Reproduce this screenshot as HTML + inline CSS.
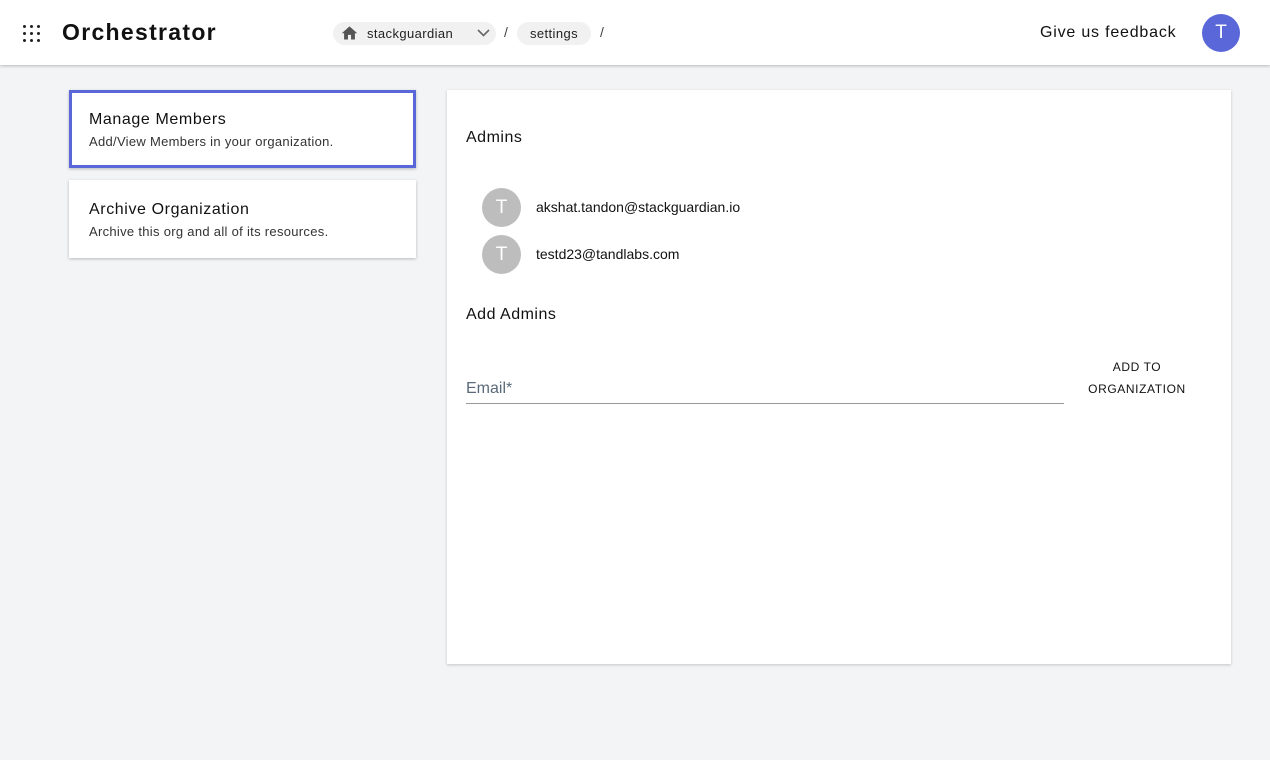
<!DOCTYPE html>
<html><head><style>
*{box-sizing:border-box;margin:0;padding:0}
body{width:1270px;height:760px;background:#f3f4f6;font-family:"Liberation Sans",sans-serif;position:relative;overflow:hidden;color:#111}
.hdr{position:absolute;left:0;top:0;width:1270px;height:65px;background:#fff;box-shadow:0 1px 3px rgba(0,0,0,.25)}
.grid{position:absolute;left:23px;top:25px;width:18px;height:18px}
.grid i{position:absolute;width:3px;height:3px;background:#222;border-radius:50%}
.title{position:absolute;left:62px;top:19px;font-size:23px;font-weight:bold;letter-spacing:1.3px}
.chip{position:absolute;top:22px;height:23px;background:#f1f1f1;border-radius:12px;font-size:13px;line-height:23px;color:#222;letter-spacing:.4px}
.sl{position:absolute;top:24px;font-size:14px;color:#444}
.fb{position:absolute;left:1040px;top:24px;font-size:16px;color:#111;letter-spacing:.8px}
.av{position:absolute;left:1202px;top:14px;width:38px;height:38px;border-radius:50%;background:#5a67d8;color:#fff;font-size:19px;text-align:center;line-height:38px}
.card{position:absolute;left:69px;width:347px;height:78px;background:#fff;box-shadow:0 1px 3px rgba(0,0,0,.25)}
.card h3{position:absolute;left:20px;top:21px;font-size:16px;font-weight:normal;color:#111;letter-spacing:.6px}
.card p{position:absolute;left:20px;top:44px;font-size:13px;color:#333;letter-spacing:.3px}
.main{position:absolute;left:447px;top:90px;width:784px;height:574px;background:#fff;box-shadow:0 1px 3px rgba(0,0,0,.2)}
.lbl{position:absolute;left:19px;font-size:16px;color:#111;letter-spacing:.5px}
.ua{position:absolute;left:35px;width:39px;height:39px;border-radius:50%;background:#bdbdbd;color:#fff;font-size:19px;text-align:center;line-height:39px}
.em{position:absolute;left:89px;font-size:14px;color:#111}
</style></head><body>
<div class="hdr">
<div class="grid"><i style="left:0;top:0"></i><i style="left:7px;top:0"></i><i style="left:14px;top:0"></i><i style="left:0;top:7px"></i><i style="left:7px;top:7px"></i><i style="left:14px;top:7px"></i><i style="left:0;top:14px"></i><i style="left:7px;top:14px"></i><i style="left:14px;top:14px"></i></div>
<div class="title">Orchestrator</div>
<div class="chip" style="left:333px;width:163px"><svg style="position:absolute;left:7px;top:2px" width="19" height="17" viewBox="0 0 24 22"><path d="M10 20v-6h4v6h5v-8h3L12 3 2 12h3v8z" fill="#555"/></svg><span style="position:absolute;left:34px">stackguardian</span><svg style="position:absolute;left:144px;top:7px" width="13" height="9" viewBox="0 0 13 9"><path d="M1 1l5.5 5.5L12 1" stroke="#666" stroke-width="1.6" fill="none"/></svg></div>
<div class="sl" style="left:504px">/</div>
<div class="chip" style="left:517px;width:74px;text-align:center">settings</div>
<div class="sl" style="left:600px">/</div>
<div class="fb">Give us feedback</div>
<div class="av">T</div>
</div>
<div class="card" style="top:90px;border:3px solid #5a67d8"><h3 style="left:17px;top:18px">Manage Members</h3><p style="left:17px;top:41px">Add/View Members in your organization.</p></div>
<div class="card" style="top:180px"><h3>Archive Organization</h3><p>Archive this org and all of its resources.</p></div>
<div class="main">
<div class="lbl" style="top:39px">Admins</div>
<div class="ua" style="top:98px">T</div><div class="em" style="top:109px">akshat.tandon@stackguardian.io</div>
<div class="ua" style="top:145px">T</div><div class="em" style="top:156px">testd23@tandlabs.com</div>
<div class="lbl" style="top:216px">Add Admins</div>
<div style="position:absolute;left:19px;top:290px;font-size:16px;color:#5a6a7a">Email*</div>
<div style="position:absolute;left:19px;top:313px;width:598px;height:1px;background:#999"></div>
<div style="position:absolute;left:630px;top:266px;width:120px;text-align:center;font-size:12px;line-height:22px;letter-spacing:.6px;color:#111">ADD TO<br>ORGANIZATION</div>
</div>
</body></html>
